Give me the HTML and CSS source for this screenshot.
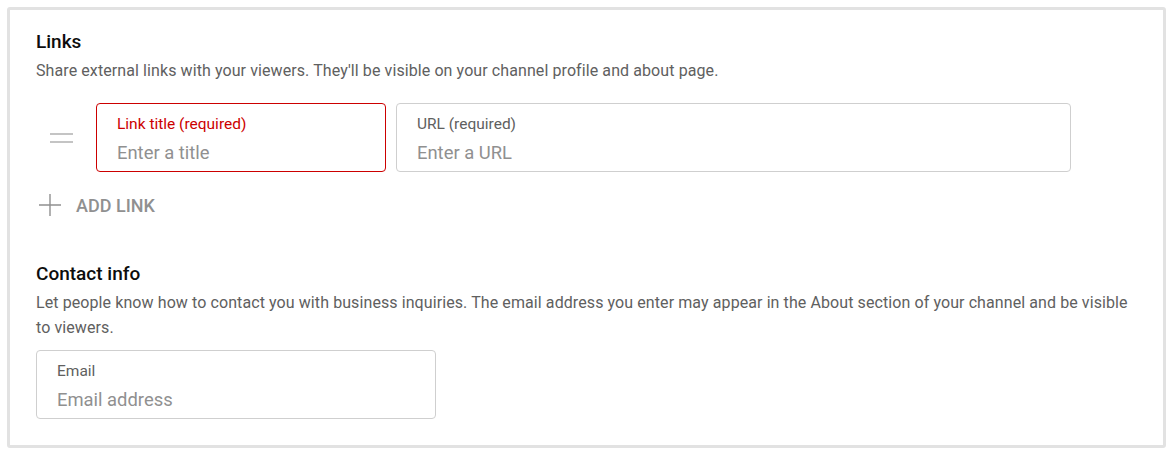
FILE: index.html
```html
<!DOCTYPE html>
<html>
<head>
<meta charset="utf-8">
<link rel="stylesheet" href="styles.css">
</head>
<body>
<div class="card">
  <section class="section">
    <h2 class="title">Links</h2>
    <p class="desc">Share external links with your viewers. They'll be visible on your channel profile and about page.</p>
    <div class="link-row">
      <div class="handle"><span></span><span></span></div>
      <div class="field field-title error">
        <div class="label">Link title (required)</div>
        <div class="ph">Enter a title</div>
      </div>
      <div class="field field-url">
        <div class="label">URL (required)</div>
        <div class="ph">Enter a URL</div>
      </div>
    </div>
    <div class="add-link">
      <svg class="plus" width="22" height="22" viewBox="0 0 22 22"><path d="M11 0V22M0 11H22" stroke="#909090" stroke-width="1.4" fill="none"/></svg>
      <span>ADD LINK</span>
    </div>
  </section>
  <section class="section contact">
    <h2 class="title">Contact info</h2>
    <p class="desc">Let people know how to contact you with business inquiries. The email address you enter may appear in the About section of your channel and be visible to viewers.</p>
    <div class="field field-email">
      <div class="label">Email</div>
      <div class="ph">Email address</div>
    </div>
  </section>
</div>
</body>
</html>
```
FILE: styles.css
```css
html, body { margin: 0; padding: 0; background: #fff; }
body { padding: 7px; font-family: Roboto, "Noto Sans", sans-serif; }
.card {
  width: 1159px;
  height: 441px;
  box-sizing: border-box;
  border: 3px solid #e2e2e2;
  border-radius: 3px;
  padding: 20px 26px 0 26px;
}
.title {
  margin: 0;
  font-size: 19px;
  font-weight: 500;
  color: #0d0d0d;
  line-height: 24px;
}
.desc {
  margin: 4px 0 0 0;
  font-size: 16px;
  letter-spacing: 0.09px;
  line-height: 25px;
  color: #606060;
}
.link-row {
  display: flex;
  align-items: center;
  margin-top: 20px;
}
.handle {
  width: 60px;
  display: flex;
  flex-direction: column;
  gap: 6px;
  padding-left: 14px;
  box-sizing: border-box;
}
.handle span { display: block; width: 23px; height: 2px; background: #c4c4c4; }
.field {
  box-sizing: border-box;
  height: 69px;
  border: 1px solid #cfcfcf;
  border-radius: 4px;
  padding: 11px 20px 0 20px;
}
.field.error { border-color: #cc0000; }
.field-title { width: 290px; }
.field-url { width: 675px; margin-left: 10px; }
.label { font-size: 15.5px; line-height: 18px; color: #606060; }
.error .label { color: #cc0000; }
.ph { font-size: 18.4px; line-height: 24px; color: #909090; margin-top: 8px; }
.add-link {
  display: flex;
  align-items: center;
  margin-top: 22px;
  margin-left: 3px;
}
.plus { display: block; }
.add-link span {
  margin-left: 15px;
  font-size: 18px;
  font-weight: 500;
  color: #909090;
}
.contact { margin-top: 46px; }
.field-email { width: 400px; margin-top: 10px; }
```
